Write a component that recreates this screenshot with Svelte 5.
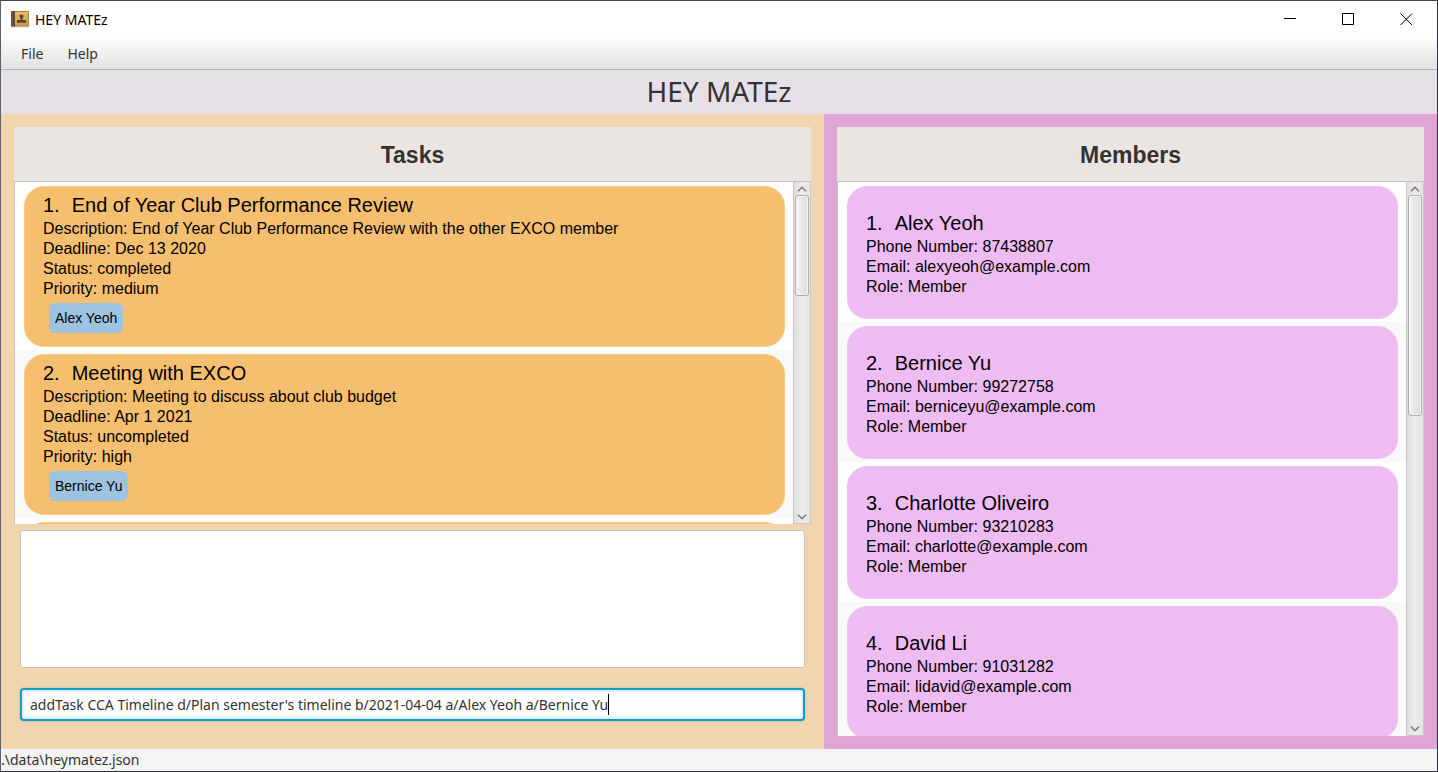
<script>
  import { onMount } from 'svelte';

  const tasks = [
    {
      title: 'End of Year Club Performance Review',
      description: 'End of Year Club Performance Review with the other EXCO member',
      deadline: 'Dec 13 2020',
      status: 'completed',
      priority: 'medium',
      assignees: ['Alex Yeoh']
    },
    {
      title: 'Meeting with EXCO',
      description: 'Meeting to discuss about club budget',
      deadline: 'Apr 1 2021',
      status: 'uncompleted',
      priority: 'high',
      assignees: ['Bernice Yu']
    }
  ];

  const members = [
    { name: 'Alex Yeoh', phone: '87438807', email: 'alexyeoh@example.com', role: 'Member' },
    { name: 'Bernice Yu', phone: '99272758', email: 'berniceyu@example.com', role: 'Member' },
    { name: 'Charlotte Oliveiro', phone: '93210283', email: 'charlotte@example.com', role: 'Member' },
    { name: 'David Li', phone: '91031282', email: 'lidavid@example.com', role: 'Member' }
  ];

  let command = $state("addTask CCA Timeline d/Plan semester's timeline b/2021-04-04 a/Alex Yeoh a/Bernice Yu");
  let field;
  let caret = $state(0);

  // Places the caret bar after the last typed character.
  function placeCaret() {
    const style = getComputedStyle(field);
    const pen = document.createElement('canvas').getContext('2d');
    pen.font = `${style.fontSize} ${style.fontFamily}`;
    const end = parseFloat(style.paddingLeft) + parseFloat(style.borderLeftWidth) + pen.measureText(command).width;
    caret = Math.min(Math.round(end), field.clientWidth - 8);
  }

  onMount(placeCaret);
</script>

{#snippet scrollbar(size, label)}
  <div class="scrollbar">
    <button class="arrow" aria-label={`Scroll ${label} up`}>
      <svg width="10" height="6" viewBox="0 0 10 6"><path d="M1 5.2 5 1.2 9 5.2" /></svg>
    </button>
    <div class="track"><div class="thumb" style:height={`${size}%`}></div></div>
    <button class="arrow" aria-label={`Scroll ${label} down`}>
      <svg width="10" height="6" viewBox="0 0 10 6"><path d="M1 0.8 5 4.8 9 0.8" /></svg>
    </button>
  </div>
{/snippet}

<div class="window">
  <header class="titlebar">
    <svg class="logo" width="19" height="18" viewBox="0 0 19 18">
      <defs>
        <linearGradient id="cover" x1="0" y1="0" x2="0" y2="1">
          <stop offset="0" stop-color="#e6bd72" />
          <stop offset="1" stop-color="#cf9c48" />
        </linearGradient>
      </defs>
      <rect x="0.5" y="16" width="18" height="1.5" fill="#d9d9d9" />
      <rect x="0" y="1" width="18" height="15.5" rx="0.8" fill="#a97c35" />
      <rect x="4" y="2" width="13.2" height="13.5" fill="url(#cover)" />
      <path d="M0.8 1H4v15.5H0.8a.8.8 0 0 1-.8-.8V1.8A.8.8 0 0 1 .8 1Z" fill="#5c4a3a" />
      <path d="M1 1v15.5" stroke="#7d7064" stroke-width="0.7" />
      <path d="M10.5 4.400c1.400 0 2.200.9 2 2.200-.1.900-.6 1.400-1 1.900v1.600h3.600v2.700H6v-2.700h3.500V8.500c-.4-.5-.9-1-1-1.900-.2-1.300.6-2.200 2-2.200Z" fill="#584630" />
    </svg>
    <span class="app-name">HEY MATEz</span>
    <div class="controls">
      <button aria-label="Minimize"><svg width="13" height="13" viewBox="0 0 13 13"><path d="M0 5.500h12" /></svg></button>
      <button aria-label="Maximize"><svg width="13" height="13" viewBox="0 0 13 13"><path d="M.5.5h11v11H.5Z" /></svg></button>
      <button aria-label="Close"><svg width="13" height="13" viewBox="0 0 13 13"><path d="m.5.5 11.500 11.500M12 .5.5 12" /></svg></button>
    </div>
  </header>

  <nav class="menubar">
    <button>File</button>
    <button>Help</button>
  </nav>

  <h1>HEY MATEz</h1>

  <main>
    <section class="pane left">
      <h2>Tasks</h2>
      <div class="list">
        <ol>
          {#each tasks as task, i}
            <li class="cell">
              <article class="card task">
                <h3><span class="index">{i + 1}.</span>{task.title}</h3>
                <p>Description: {task.description}</p>
                <p>Deadline: {task.deadline}</p>
                <p>Status: {task.status}</p>
                <p>Priority: {task.priority}</p>
                <div class="tags">
                  {#each task.assignees as person}<span class="tag">{person}</span>{/each}
                </div>
              </article>
            </li>
          {/each}
          <li class="cell"><article class="card task"></article></li>
        </ol>
        {@render scrollbar(32, 'tasks')}
      </div>
      <textarea class="result" readonly aria-label="Result"></textarea>
      <div class="command">
        <input type="text" aria-label="Command" bind:this={field} bind:value={command} oninput={placeCaret} />
        <span class="caret" style:left={`${caret}px`}></span>
      </div>
    </section>

    <section class="pane right">
      <h2>Members</h2>
      <div class="list">
        <ol>
          {#each members as member, i}
            <li class="cell">
              <article class="card member">
                <h3><span class="index">{i + 1}.</span>{member.name}</h3>
                <p>Phone Number: {member.phone}</p>
                <p>Email: {member.email}</p>
                <p>Role: {member.role}</p>
              </article>
            </li>
          {/each}
        </ol>
        {@render scrollbar(42, 'members')}
      </div>
    </section>
  </main>

  <footer>.\data\heymatez.json</footer>
</div>

<style>
  :global(body) {
    margin: 0;
  }

  * {
    box-sizing: border-box;
  }

  .window {
    display: flex;
    flex-direction: column;
    height: 100vh;
    border: 1px solid #2b3442;
    border-left-color: #5f6068;
    border-top-color: #44464c;
    background: #f4f4f4;
    color: #333;
    font-family: 'Noto Sans', 'Open Sans', sans-serif;
    font-size: 14px;
    overflow: hidden;
  }

  button {
    padding: 0;
    border: 0;
    background: none;
    color: inherit;
    font: inherit;
  }

  .titlebar {
    display: flex;
    align-items: center;
    flex: none;
    height: 38px;
    padding: 0 2px 2px 10px;
    background: #fff;
    color: #000;
  }

  .app-name {
    margin-left: 5px;
  }

  .controls {
    display: flex;
    height: 100%;
    margin-left: auto;
  }

  .controls button {
    display: grid;
    place-items: center;
    width: 58px;
  }

  .controls path {
    fill: none;
    stroke: #000;
  }

  .menubar {
    display: flex;
    flex: none;
    gap: 24px;
    height: 31px;
    padding: 0 20px 2px;
    border-bottom: 1px solid #b5b3b7;
    background: linear-gradient(#fbfbfb, #e2e2e2);
  }

  h1 {
    flex: none;
    height: 44px;
    margin: 0;
    background: #e6dfe7;
    font-size: 28px;
    font-weight: 400;
    line-height: 42px;
    text-align: center;
  }

  main {
    display: grid;
    grid-template-columns: 823fr 613fr;
    grid-template-rows: minmax(0, 1fr);
    flex: 1;
    min-height: 0;
  }

  .pane {
    display: flex;
    flex-direction: column;
    min-width: 0;
    padding: 13px;
  }

  .left {
    background: #f1d5ae;
  }

  .right {
    background: #dfa5d5;
  }

  h2 {
    flex: none;
    height: 54px;
    margin: 0;
    background: #eae5e1;
    font-family: 'Liberation Sans', Arial, sans-serif;
    font-size: 23px;
    font-weight: 700;
    line-height: 56px;
    text-align: center;
  }

  .list {
    display: flex;
    flex: 1;
    min-height: 0;
    border: 1px solid #c4c4c4;
    border-width: 1px 0 0 1px;
    background: #fff;
    color: #000;
    font-family: 'Liberation Sans', Arial, sans-serif;
    font-size: 16px;
    line-height: 20px;
  }

  ol {
    flex: 1;
    min-width: 0;
    margin: 0;
    padding: 0;
    list-style: none;
    overflow: hidden;
  }

  .cell {
    padding: 4px 8px 3px 9px;
  }

  .cell:nth-child(even) {
    background: #f9f9f9;
  }

  .card {
    border: 1px solid;
    border-radius: 20px;
  }

  .task {
    height: 161px;
    padding: 5px 18px 0;
    border-color: #f8cb8a;
    background: #f6bf6f;
  }

  .member {
    height: 133px;
    padding: 23px 18px 0;
    border-color: #ecc4ef;
    background: #eebbf2;
  }

  h3 {
    margin: 0 0 1px;
    font-size: 20px;
    font-weight: 400;
    line-height: 26px;
  }

  .member h3 {
    line-height: 26px;
  }

  .index {
    margin-right: 12px;
  }

  p {
    margin: 0;
  }

  .tags {
    display: flex;
    gap: 6px;
    padding: 4px 6px;
  }

  .tag {
    padding: 0 6px;
    border-radius: 6px;
    background: #9dc3e0;
    font-size: 14px;
    line-height: 30px;
  }

  .scrollbar {
    display: flex;
    flex: none;
    flex-direction: column;
    width: 18px;
    border: 1px solid #c8c8c8;
    border-top: 0;
    background: linear-gradient(90deg, #dedede, #ececec 50%, #e4e4e4);
  }

  .arrow {
    display: grid;
    place-items: center;
    flex: none;
    height: 13px;
  }

  .arrow path {
    fill: none;
    stroke: #777;
    stroke-width: 1.5;
  }

  .track {
    flex: 1;
    min-height: 0;
    padding: 0 1px;
  }

  .thumb {
    border: 1px solid #adadad;
    border-radius: 3px;
    background: linear-gradient(90deg, #f3f3f3, #dcdcdc);
    box-shadow: inset 0 0 0 1px #f6f6f6;
  }

  .result {
    display: block;
    flex: none;
    height: 138px;
    margin: 6px 6px 0;
    border: 1px solid #c4c4c4;
    border-radius: 3px;
    background: #fff;
    outline: 0;
    resize: none;
  }

  .command {
    position: relative;
    flex: none;
    margin: 20px 6px 15px;
  }

  input {
    display: block;
    width: 100%;
    height: 33px;
    padding: 0 8px;
    border: 2px solid #0f9dcb;
    border-radius: 4px;
    outline: 0;
    background: #fff;
    box-shadow: inset 0 0 0 2px #dff1f8, 0 0 2px #6fb5c8;
    color: #333;
    caret-color: transparent;
    font-family: inherit;
    font-size: 14px;
  }

  .caret {
    position: absolute;
    top: 6px;
    width: 1px;
    height: 21px;
    background: #000;
  }

  footer {
    flex: none;
    height: 22px;
    background: #f4f4f4;
    line-height: 22px;
  }
</style>
